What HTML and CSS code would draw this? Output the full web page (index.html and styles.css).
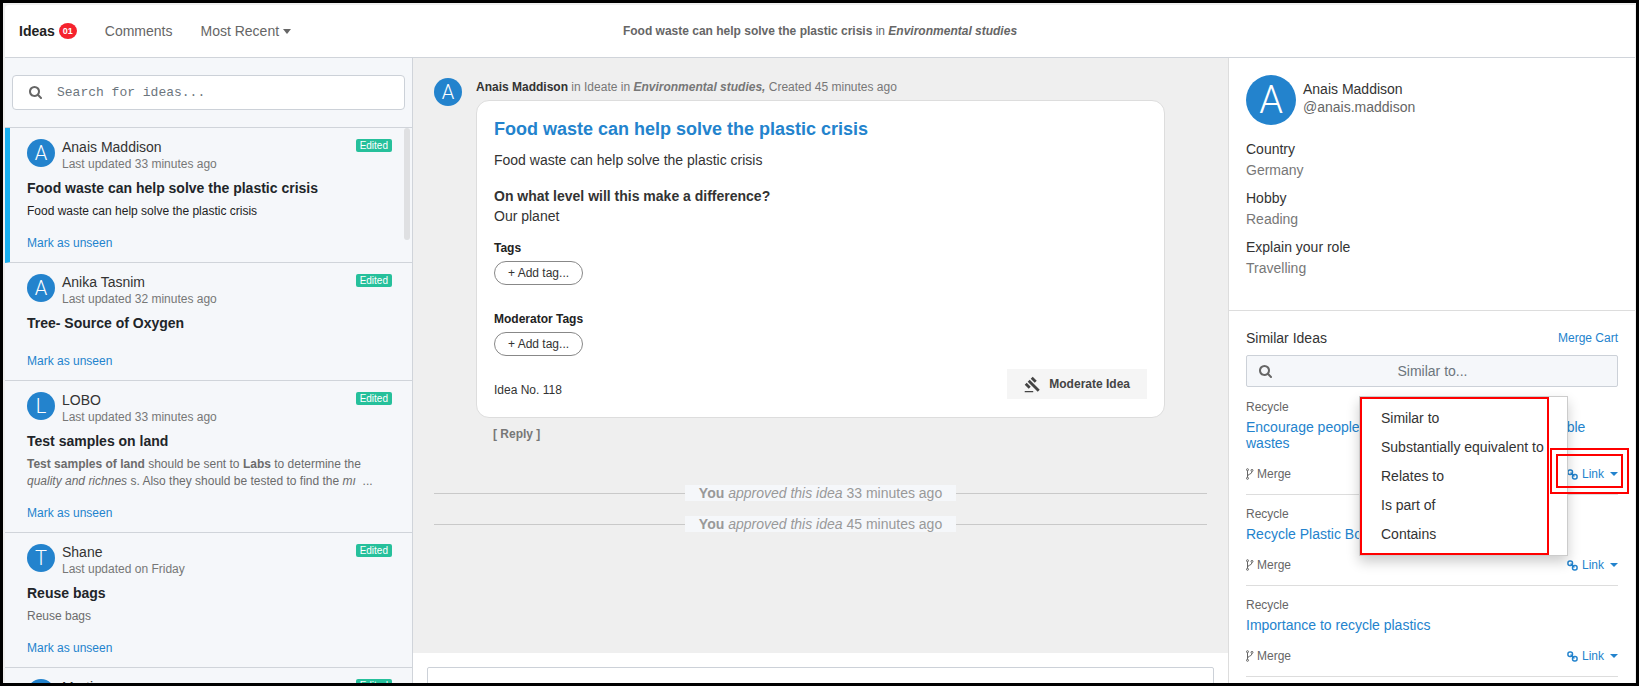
FILE: index.html
```html
<!DOCTYPE html>
<html lang="en">
<head>
    <meta charset="UTF-8">
    <meta name="viewport" content="width=device-width, initial-scale=1.0">
    <title>Ideas</title>
    <link rel="stylesheet" href="styles.css">
</head>
<body>
    <!-- Icon shapes, reused below -->
    <svg class="icon-defs" aria-hidden="true">
        <symbol id="icon-search" viewBox="0 0 1664 1664">
            <path d="M1152 704q0-185-131.500-316.500t-316.500-131.500-316.500 131.500-131.500 316.500 131.500 316.500 316.500 131.500 316.500-131.500 131.500-316.500zm512 832q0 52-38 90t-90 38q-54 0-90-38l-343-342q-179 124-399 124-143 0-273.500-55.500t-225-150-150-225-55.500-273.500 55.500-273.500 150-225 225-150 273.500-55.500 273.500 55.500 225 150 150 225 55.500 273.500q0 220-124 399l343 343q37 37 37 90z"/>
        </symbol>
        <symbol id="icon-gavel" viewBox="0 0 24 24">
            <path d="M1 21h12v2H1zM5.245 8.070l2.830-2.827 14.140 14.142-2.828 2.828zM12.317 1l5.657 5.656-2.830 2.830-5.654-5.660zM3.825 9.485l5.657 5.657-2.828 2.828-5.657-5.657z"/>
        </symbol>
        <symbol id="icon-link" viewBox="0 0 12 12">
            <g fill="none" stroke="currentColor" stroke-width="1.600" stroke-linecap="round">
                <rect x="1" y="1" width="5" height="5" rx="2.200"/>
                <rect x="6" y="6" width="5" height="5" rx="2.200"/>
                <path d="M4.400 4.400l3.200 3.200"/>
            </g>
        </symbol>
        <symbol id="icon-fork" viewBox="0 0 8 12">
            <g fill="none" stroke="currentColor" stroke-width="1">
                <circle cx="1.500" cy="1.700" r="1"/>
                <circle cx="6" cy="2.400" r="1"/>
                <circle cx="1.500" cy="10.300" r="1"/>
                <path d="M1.500 2.500v7M6 3.400c0 3.400-4.500 2.200-4.500 5"/>
            </g>
        </symbol>
    </svg>

    <div class="app">
        <header class="topbar">
            <nav class="tabs">
                <a href="#" class="tab active">Ideas <span class="count">01</span></a>
                <a href="#" class="tab">Comments</a>
                <button type="button" class="tab sort">Most Recent <span class="caret"></span></button>
            </nav>
            <p class="crumb"><b>Food waste can help solve the plastic crisis</b> in <b><i>Environmental studies</i></b></p>
        </header>

        <div class="columns">
            <aside class="sidebar">
                <div class="search">
                    <label for="ideaSearch"><svg class="icon-search"><use href="#icon-search"/></svg></label>
                    <input type="text" id="ideaSearch" placeholder="Search for ideas...">
                </div>
                <div class="idea-list">
                    <article class="idea selected">
                        <div class="idea-head">
                            <span class="avatar">A</span>
                            <div class="idea-who">
                                <div class="name">Anais Maddison</div>
                                <div class="updated">Last updated 33 minutes ago</div>
                            </div>
                            <span class="edited">Edited</span>
                        </div>
                        <h3>Food waste can help solve the plastic crisis</h3>
                        <p class="excerpt dark">Food waste can help solve the plastic crisis</p>
                        <a href="#" class="unseen">Mark as unseen</a>
                    </article>
                    <article class="idea">
                        <div class="idea-head">
                            <span class="avatar">A</span>
                            <div class="idea-who">
                                <div class="name">Anika Tasnim</div>
                                <div class="updated">Last updated 32 minutes ago</div>
                            </div>
                            <span class="edited">Edited</span>
                        </div>
                        <h3>Tree- Source of Oxygen</h3>
                        <a href="#" class="unseen">Mark as unseen</a>
                    </article>
                    <article class="idea">
                        <div class="idea-head">
                            <span class="avatar">L</span>
                            <div class="idea-who">
                                <div class="name">LOBO</div>
                                <div class="updated">Last updated 33 minutes ago</div>
                            </div>
                            <span class="edited">Edited</span>
                        </div>
                        <h3>Test samples on land</h3>
                        <p class="excerpt"><b>Test samples of land</b> should be sent to <b>Labs</b> to determine the<br><i>quality and richnes</i> s. Also they should be tested to find the <i>mı</i>&nbsp; ...</p>
                        <a href="#" class="unseen">Mark as unseen</a>
                    </article>
                    <article class="idea">
                        <div class="idea-head">
                            <span class="avatar">T</span>
                            <div class="idea-who">
                                <div class="name">Shane</div>
                                <div class="updated">Last updated on Friday</div>
                            </div>
                            <span class="edited">Edited</span>
                        </div>
                        <h3>Reuse bags</h3>
                        <p class="excerpt">Reuse bags</p>
                        <a href="#" class="unseen">Mark as unseen</a>
                    </article>
                    <article class="idea">
                        <div class="idea-head">
                            <span class="avatar">M</span>
                            <div class="idea-who">
                                <div class="name">Martin</div>
                            </div>
                            <span class="edited">Edited</span>
                        </div>
                    </article>
                    <span class="scroll-thumb"></span>
                </div>
            </aside>

            <main class="content">
                <div class="stream">
                    <div class="post">
                        <span class="avatar">A</span>
                        <div class="post-body">
                            <p class="post-meta"><b class="author">Anais Maddison</b> in Ideate in <b><i>Environmental studies,</i></b> Created 45 minutes ago</p>
                            <section class="card">
                                <h2>Food waste can help solve the plastic crisis</h2>
                                <p>Food waste can help solve the plastic crisis</p>
                                <h4 class="question">On what level will this make a difference?</h4>
                                <p>Our planet</p>
                                <h5>Tags</h5>
                                <button type="button" class="add-tag">+ Add tag...</button>
                                <h5 class="mod-tags">Moderator Tags</h5>
                                <button type="button" class="add-tag">+ Add tag...</button>
                                <div class="card-foot">
                                    <span>Idea No. 118</span>
                                    <button type="button" class="moderate"><svg class="icon-gavel"><use href="#icon-gavel"/></svg>Moderate Idea</button>
                                </div>
                            </section>
                            <button type="button" class="reply">[ Reply ]</button>
                        </div>
                    </div>
                    <div class="event"><span><b>You</b> <i>approved this idea</i> 33 minutes ago</span></div>
                    <div class="event"><span><b>You</b> <i>approved this idea</i> 45 minutes ago</span></div>
                </div>
                <div class="composer">
                    <textarea aria-label="Comment"></textarea>
                </div>
            </main>

            <aside class="details">
                <section class="profile">
                    <div class="profile-head">
                        <span class="avatar large">A</span>
                        <div class="profile-who">
                            <div class="name">Anais Maddison</div>
                            <div class="handle">@anais.maddison</div>
                        </div>
                    </div>
                    <dl>
                        <dt>Country</dt>
                        <dd>Germany</dd>
                        <dt>Hobby</dt>
                        <dd>Reading</dd>
                        <dt>Explain your role</dt>
                        <dd>Travelling</dd>
                    </dl>
                </section>
                <section class="similar">
                    <div class="similar-head">
                        <h4>Similar Ideas</h4>
                        <a href="#">Merge Cart</a>
                    </div>
                    <div class="similar-search">
                        <label for="similarSearch"><svg class="icon-search"><use href="#icon-search"/></svg></label>
                        <input type="text" id="similarSearch" placeholder="Similar to...">
                    </div>
                    <article class="match">
                        <p class="topic">Recycle</p>
                        <a href="#" class="match-title">Encourage people to segregate the non-biodegradable wastes</a>
                        <div class="match-actions">
                            <button type="button" class="merge"><svg class="icon-fork"><use href="#icon-fork"/></svg>Merge</button>
                            <div class="link-wrap">
                                <button type="button" class="link"><svg class="icon-link"><use href="#icon-link"/></svg>Link<span class="caret"></span></button>
                                <div class="link-menu">
                                    <div class="menu-items">
                                        <button type="button">Similar to</button>
                                        <button type="button">Substantially equivalent to</button>
                                        <button type="button">Relates to</button>
                                        <button type="button">Is part of</button>
                                        <button type="button">Contains</button>
                                    </div>
                                </div>
                                <span class="mark outer"></span>
                                <span class="mark inner"></span>
                            </div>
                        </div>
                    </article>
                    <article class="match">
                        <p class="topic">Recycle</p>
                        <a href="#" class="match-title">Recycle Plastic Bottles</a>
                        <div class="match-actions">
                            <button type="button" class="merge"><svg class="icon-fork"><use href="#icon-fork"/></svg>Merge</button>
                            <button type="button" class="link"><svg class="icon-link"><use href="#icon-link"/></svg>Link<span class="caret"></span></button>
                        </div>
                    </article>
                    <article class="match">
                        <p class="topic">Recycle</p>
                        <a href="#" class="match-title">Importance to recycle plastics</a>
                        <div class="match-actions">
                            <button type="button" class="merge"><svg class="icon-fork"><use href="#icon-fork"/></svg>Merge</button>
                            <button type="button" class="link"><svg class="icon-link"><use href="#icon-link"/></svg>Link<span class="caret"></span></button>
                        </div>
                    </article>
                </section>
            </aside>
        </div>
    </div>
</body>
</html>
```

FILE: styles.css
```css
* {
    box-sizing: border-box;
}
body {
    margin: 0;
    font-family: "Liberation Sans", Arial, sans-serif;
    font-size: 14px;
    line-height: 20px;
    color: #333;
}
h2, h3, h4, h5, p, dl, dd {
    margin: 0;
}
a {
    color: #2383cd;
    text-decoration: none;
}
button {
    font-family: inherit;
    font-size: 12px;
    line-height: 16px;
    padding: 0;
    border: none;
    background: none;
    color: inherit;
    cursor: pointer;
}
svg {
    display: block;
    fill: currentColor;
}
.icon-defs {
    position: absolute;
    width: 0;
    height: 0;
}
.icon-search {
    width: 13px;
    height: 13px;
    color: #666;
}
.icon-gavel {
    width: 17px;
    height: 17px;
}
.icon-link {
    width: 11px;
    height: 11px;
}
.icon-fork {
    width: 8px;
    height: 12px;
}
.caret {
    display: inline-block;
    border-top: 4px solid currentColor;
    border-left: 4px solid transparent;
    border-right: 4px solid transparent;
}

/* Page frame */
.app {
    display: flex;
    flex-direction: column;
    height: 100vh;
    overflow: hidden;
    border: 3px solid #000;
    padding: 2px 1px 0 2px;
    background: #efefef;
}
.topbar {
    position: relative;
    flex: none;
    height: 53px;
    display: flex;
    align-items: center;
    padding: 0 14px;
    background: #fff;
    border-bottom: 1px solid #d0d4da;
    border-radius: 4px 0 0 0;
}
.tabs {
    display: flex;
    align-items: center;
    gap: 28px;
}
.tab {
    display: flex;
    align-items: center;
    gap: 4px;
    font-size: 14px;
    line-height: 20px;
    color: #666;
}
.tab.active {
    color: #222;
    font-weight: bold;
}
.sort .caret {
    border-width: 5px 4px 0;
}
.count {
    width: 18px;
    height: 16px;
    border-radius: 50%;
    background: #f5222d;
    color: #fff;
    font-size: 9px;
    line-height: 16px;
    text-align: center;
}
.crumb {
    position: absolute;
    left: 0;
    right: 0;
    font-size: 12px;
    text-align: center;
    color: #666;
    pointer-events: none;
}
.columns {
    flex: 1;
    min-height: 0;
    display: grid;
    grid-template-columns: 408px 1fr 407px;
}

/* Avatars */
.avatar {
    flex: none;
    width: 28px;
    height: 28px;
    border-radius: 50%;
    background: #2383cd;
    color: #fff;
    font-family: Roboto, sans-serif;
    font-size: 20px;
    font-weight: 300;
    line-height: 29px;
    text-align: center;
}
.avatar.large {
    width: 50px;
    height: 50px;
    font-size: 38px;
    line-height: 51px;
}

/* Left column */
.sidebar {
    display: flex;
    flex-direction: column;
    min-height: 0;
    background: #f5f7fa;
    border-right: 1px solid #d0d4da;
}
.search {
    flex: none;
    display: flex;
    align-items: center;
    height: 35px;
    margin: 17px 7px;
    padding: 0 16px;
    gap: 15px;
    background: #fff;
    border: 1px solid #ccd1d8;
    border-radius: 4px;
}
.search input {
    flex: 1;
    border: none;
    padding: 0;
    background: none;
    font-family: "Liberation Mono", monospace;
    font-size: 13px;
}
input::placeholder {
    color: #6c757d;
    opacity: 1;
}
.idea-list {
    position: relative;
    flex: 1;
    min-height: 0;
    overflow: hidden;
    border-top: 1px solid #d0d4da;
}
.idea {
    padding: 11px 20px 10px 22px;
    border-bottom: 1px solid #d0d4da;
}
.idea.selected {
    border-left: 5px solid #1ab0f0;
    padding-left: 17px;
}
.idea-head {
    display: flex;
    align-items: flex-start;
}
.idea-who {
    flex: 1;
    margin-left: 7px;
    line-height: 17px;
}
.updated {
    font-size: 12px;
    color: #777;
}
.edited {
    padding: 0 4px;
    border-radius: 2px;
    background: #26c09b;
    color: #fff;
    font-size: 10px;
    line-height: 13px;
}
.idea h3 {
    margin: 5px 0;
    font-size: 14px;
    line-height: 20px;
    color: #212529;
}
.excerpt {
    font-size: 12px;
    line-height: 17px;
    color: #6c6c6c;
}
.excerpt.dark {
    color: #222;
}
.unseen {
    display: block;
    padding-top: 15px;
    font-size: 12px;
    line-height: 17px;
}
.scroll-thumb {
    position: absolute;
    top: 0;
    right: 2px;
    width: 6px;
    height: 112px;
    border-radius: 3px;
    background: #dfe0e2;
}

/* Middle column */
.content {
    display: flex;
    flex-direction: column;
    min-height: 0;
    background: #fff;
}
.stream {
    flex: 1;
    min-height: 0;
    overflow: hidden;
    padding: 20px 21px;
    background: #efefef;
}
.post {
    display: flex;
    gap: 14px;
    margin-bottom: 35px;
}
.post-body {
    flex: 1;
    padding-right: 42px;
}
.post-meta {
    font-size: 12px;
    line-height: 18px;
    color: #777;
    margin-bottom: 4px;
}
.author {
    color: #333;
}
.card {
    padding: 16px 17px 17px;
    border: 1px solid #ddd;
    border-radius: 13px;
    background: #fff;
}
.card h2 {
    margin-bottom: 9px;
    font-size: 18px;
    line-height: 24px;
    color: #2383cd;
}
.card .question {
    margin-top: 16px;
    font-size: 14px;
}
.card h5 {
    margin: 14px 0 5px;
    font-size: 12px;
    line-height: 16px;
    color: #222;
}
.card .mod-tags {
    margin-top: 26px;
}
.add-tag {
    height: 24px;
    padding: 0 13px;
    border: 1px solid #888;
    border-radius: 12px;
    background: #fff;
}
.card-foot {
    display: flex;
    align-items: flex-start;
    justify-content: space-between;
    margin-top: 13px;
    font-size: 12px;
}
.card-foot span {
    margin-top: 11px;
}
.moderate {
    display: flex;
    align-items: center;
    gap: 8px;
    height: 30px;
    padding: 0 17px;
    background: #f5f5f5;
    color: #444;
    font-weight: bold;
}
.reply {
    margin: 8px 17px;
    color: #777;
    font-weight: bold;
}
.event {
    display: flex;
    align-items: center;
    height: 16px;
    margin-bottom: 15px;
    line-height: 16px;
    color: #999;
}
.event::before, .event::after {
    content: "";
    flex: 1;
    border-top: 1px solid #c9c9c9;
}
.event span {
    padding: 0 14px;
    background: #f5f7fa;
}
.composer {
    flex: 0 0 30px;
    overflow: hidden;
    padding: 14px;
}
.composer textarea {
    display: block;
    width: 100%;
    height: 60px;
    border: 1px solid #ccd1d8;
    border-radius: 2px;
    resize: none;
}

/* Right column */
.details {
    display: flex;
    flex-direction: column;
    min-height: 0;
    overflow: hidden;
    background: #fff;
    border-left: 1px solid #ddd;
}
.profile {
    flex: none;
    padding: 17px 17px 24px;
    border-bottom: 1px solid #ddd;
}
.profile-head {
    display: flex;
    align-items: center;
    gap: 7px;
    line-height: 18px;
    margin-bottom: 14px;
}
.profile-who {
    padding-bottom: 4px;
}
.handle {
    color: #666;
}
.profile dt {
    line-height: 21px;
}
.profile dd {
    margin-bottom: 7px;
    line-height: 21px;
    color: #777;
}
.similar {
    padding: 16px 17px;
}
.similar-head {
    display: flex;
    align-items: center;
    justify-content: space-between;
    height: 22px;
    font-size: 12px;
}
.similar-head h4 {
    font-size: 14px;
    font-weight: normal;
}
.similar-search {
    display: flex;
    align-items: center;
    height: 32px;
    margin: 6px 0 12px;
    padding: 0 12px;
    background: #f5f7fa;
    border: 1px solid #ccd1d8;
    border-radius: 2px;
}
.similar-search input {
    flex: 1;
    min-width: 0;
    padding: 0 12px 0 0;
    border: none;
    background: none;
    font-family: inherit;
    font-size: 14px;
    text-align: center;
}
.match {
    margin-bottom: 11px;
    border-bottom: 1px solid #ddd;
}
.topic {
    margin-bottom: 4px;
    font-size: 12px;
    line-height: 16px;
    color: #666;
}
.match-title {
    display: block;
    line-height: 16px;
}
.match-actions {
    display: flex;
    align-items: center;
    justify-content: space-between;
    margin-top: 15px;
    padding-bottom: 12px;
}
.merge, .link {
    display: flex;
    align-items: center;
    gap: 3px;
    color: #666;
}
.link {
    gap: 4px;
    color: #2383cd;
}
.link .caret {
    margin-left: 2px;
}
.link-wrap {
    position: relative;
}
.link-menu {
    position: absolute;
    top: -70px;
    right: 50px;
    width: 209px;
    z-index: 1;
    background: #fff;
    border: 1px solid #ccc;
    box-shadow: 0 6px 12px rgba(0, 0, 0, 0.2);
}
.menu-items {
    width: 189px;
    padding: 5px 0 4px;
    border: 2px solid #f00;
}
.menu-items button {
    display: block;
    width: 100%;
    padding-left: 19px;
    font-size: 14px;
    line-height: 29px;
    text-align: left;
    white-space: nowrap;
}
.mark {
    position: absolute;
    z-index: 2;
    border: 2px solid #f00;
    pointer-events: none;
}
.mark.outer {
    inset: -18px -11px -12px -17px;
}
.mark.inner {
    inset: -12px -5px -6px -11px;
}
```
